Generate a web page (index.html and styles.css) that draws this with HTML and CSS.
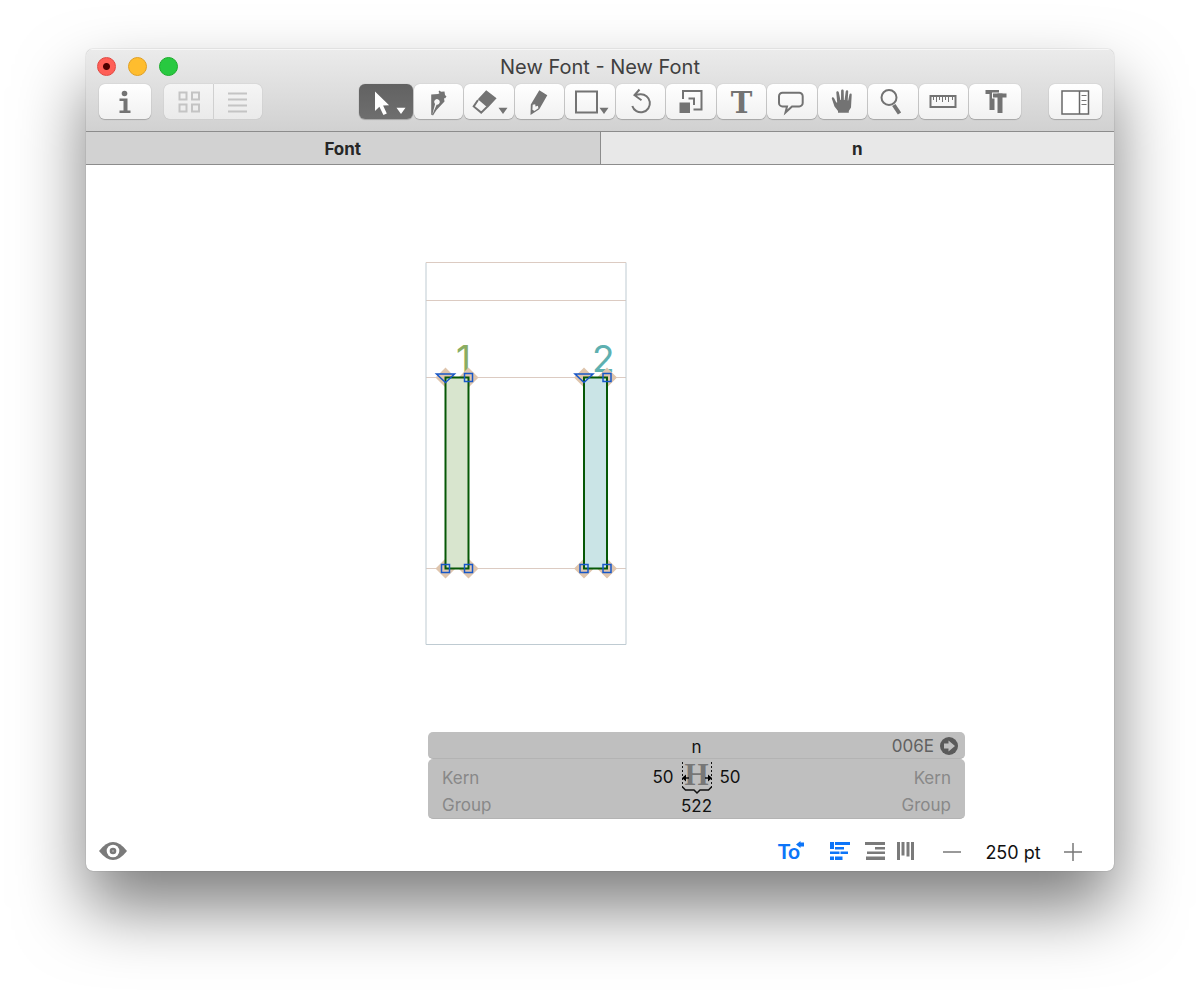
FILE: index.html
```html
<!DOCTYPE html>
<html lang="en">
<head>
<meta charset="utf-8">
<title>New Font - New Font</title>
<link rel="stylesheet" href="styles.css">
</head>
<body>
<main class="window">
  <header class="titlebar">
    <div class="title-row">
      <div class="lights">
        <button class="light close" aria-label="Close"></button>
        <button class="light minimize" aria-label="Minimize"></button>
        <button class="light expand" aria-label="Zoom"></button>
      </div>
      <h1 class="title">New Font - New Font</h1>
    </div>
    <div class="toolbar">
      <button class="tool info" aria-label="Info"><svg viewBox="0 0 52 35"><circle class="fill" cx="25.500" cy="9.500" r="2.800"/><path class="fill" d="M20.500 14.500h8v12h3v2.500H20.500v-2.500h4V17h-4z"/></svg></button>
      <div class="segment">
        <button class="tool" aria-label="Grid view"><svg viewBox="0 0 49 35"><path class="line" d="M15.500 8.500h7v7h-7zM28 8.500h7v7h-7zM15.500 20.500h7v7h-7zM28 20.500h7v7h-7z"/></svg></button>
        <button class="tool" aria-label="List view"><svg viewBox="0 0 49 35"><path class="line" d="M15 9.500h19M15 15.500h19M15 21.500h19M15 27.500h19"/></svg></button>
      </div>
      <nav class="tools" aria-label="Tools">
        <button class="tool active" aria-label="Select"><svg viewBox="0 0 54 35"><path class="fill" d="M16 7.500V27l4.400-4.200 4 8.200 3.400-1.600-3.700-7.800 6-.4zM37.500 23.700h9L42 30z"/></svg></button>
        <button class="tool" aria-label="Draw"><svg viewBox="0 0 50 35"><path class="fill" d="M25.500 6.500l1.500 1.300 3.500-.3.500 3.500 1.500 1.500-1.500 2-1-.5.500 3.500-8 8.500-3.500 5.500-.8-.5 4.400-10.300a2.800 2.800 0 1 0-1.500-.7L18.200 31l-1-.3V10.500l6.800-.5 1.500-.7-1-1.500z"/></svg></button>
        <button class="tool" aria-label="Erase"><svg viewBox="0 0 50 35"><path class="fill" d="M22.200 6.300l10.400 8-8.800 9.500-10-8.500zM34.500 23.700h9L39 30z"/><path class="line" d="M14 16l-4.300 6.400 7.500 6.200 6-5.800"/></svg></button>
        <button class="tool" aria-label="Pencil"><svg viewBox="0 0 50 35"><path class="fill" fill-rule="evenodd" d="M24.300 6.300l8 5-8 14L15.500 31l.3-10.500zM17.700 20.800l-.3 5 2 1.200 4-2.700-.5-2.500-2.400.8-.3-2.300z"/></svg></button>
        <button class="tool" aria-label="Rectangle"><svg viewBox="0 0 50 35"><path class="line" d="M11 7.500h21v21H11z"/><path class="fill" d="M34.500 23.700h9L39 30z"/></svg></button>
        <button class="tool" aria-label="Rotate"><svg viewBox="0 0 50 35"><path class="line" d="M16.300 22a9 9 0 1 0 8-11.700l-6 .7M23.500 5.500L18.500 11.200l7 5"/></svg></button>
        <button class="tool" aria-label="Scale"><svg viewBox="0 0 50 35"><path class="fill" d="M13.500 18.500h10.500v10.500H13.500z"/><path class="line" d="M17 15V7h18.500v18.500h-8M22.500 14.500H28V21"/></svg></button>
        <button class="tool letter" aria-label="Text"><span class="glyph-t">T</span></button>
        <button class="tool" aria-label="Annotate"><svg viewBox="0 0 50 35"><path class="line" d="M15.500 8.700h16.700a3.500 3.500 0 0 1 3.500 3.500v6.700a3.500 3.500 0 0 1-3.500 3.500H25L18.500 28.500 20 22.400h-4.500a3.500 3.500 0 0 1-3.500-3.500v-6.700a3.500 3.500 0 0 1 3.500-3.500z"/></svg></button>
        <button class="tool" aria-label="Hand"><svg viewBox="0 0 50 35"><path class="fill" d="M21 28.800V27l-3.500-4.500-2.700-8c0-1.400 1.600-1.500 2.200-.4l2.300 4.400.9.100L19.300 8.500c0-1.700 2.200-1.800 2.500-.2L23.400 16h.6l.1-9.300c.2-1.600 2.400-1.600 2.600 0l.2 9.300h.7l1.100-8.600c.3-1.500 2.500-1.300 2.500.2L30.700 16.500h.5l1.300-6.200c.4-1.400 2.300-1 2.200.4L34 23.500l-2.200 3.500v1.800z"/></svg></button>
        <button class="tool" aria-label="Magnify"><svg viewBox="0 0 50 35"><circle class="line" cx="21" cy="13.500" r="7.500"/><path class="handle" d="M25.800 21L31.500 29.500"/></svg></button>
        <button class="tool" aria-label="Measure"><svg viewBox="0 0 50 35"><path class="line" d="M12.500 12h25v11h-25z"/><path class="hair" d="M15.500 12v4M18.500 12v6M21.500 12v4M24.500 12v6M27.500 12v4M30.500 12v6M34.500 12v4"/></svg></button>
        <button class="tool" aria-label="True type instructions"><svg viewBox="0 0 52 35"><rect class="fill" x="16.500" y="6" width="13.500" height="4"/><rect class="fill" x="20.500" y="6" width="5" height="20"/><rect class="halo" x="23" y="8.500" width="15" height="6"/><rect class="halo" x="27" y="12" width="7" height="17"/><rect class="fill" x="24" y="9.500" width="13.500" height="4"/><rect class="fill" x="28.500" y="9.500" width="5" height="19.500"/></svg></button>
      </nav>
      <button class="tool sidebar" aria-label="Toggle sidebar"><svg viewBox="0 0 53 35"><path class="sheet" d="M13 7h26.500v23H13zM30.500 7v23"/><path class="hair" d="M32.500 11.500h5M32.500 16.500h5M32.500 20.500h5"/></svg></button>
    </div>
  </header>
  <div class="tabs" role="tablist">
    <button class="tab" role="tab" aria-selected="false">Font</button>
    <button class="tab selected" role="tab" aria-selected="true">n</button>
  </div>
  <section class="canvas">
    <svg class="glyph" viewBox="0 0 202 384">
      <path class="metric" d="M0 38.500h200M0 115.500h200M0 306.500h200"/>
      <path class="frame" d="M0 .5h200v382H0z"/>
      <path class="metric" d="M0 .5h200"/>
      <text class="one" x="30" y="110">1</text>
      <text class="two" x="166" y="110">2</text>
      <path class="diamond" d="M19.500 105.500l10 10-10 10-10-10zM42.500 105.500l10 10-10 10-10-10zM158 105.500l10 10-10 10-10-10zM181 105.500l10 10-10 10-10-10zM19.500 296.500l10 10-10 10-10-10zM42.500 296.500l10 10-10 10-10-10zM158 296.500l10 10-10 10-10-10zM181 296.500l10 10-10 10-10-10z"/>
      <path class="stem green" d="M19.500 115.500h23v191h-23z"/>
      <path class="stem teal" d="M158 115.500h23v191h-23z"/>
      <path class="node" d="M10.500 112h18l-9 8.500zM149 112h18l-9 8.500zM38.500 111.500h8v8h-8zM177 111.500h8v8h-8zM15.500 302.500h8v8h-8zM38.500 302.500h8v8h-8zM154 302.500h8v8h-8zM177 302.500h8v8h-8z"/>
    </svg>
    <form class="panel">
      <div class="panel-head">
        <span class="name">n</span>
        <span class="code">006E</span>
        <button type="button" class="go" aria-label="Show glyph"><svg viewBox="0 0 18 18"><circle cx="9" cy="9" r="9"/><path d="M4 6.500h4.500V3.500L15 9l-6.500 5.500v-3H4z"/></svg></button>
      </div>
      <div class="panel-body">
        <div class="side">
          <input aria-label="Left kerning" placeholder="Kern">
          <input aria-label="Left group" placeholder="Group">
        </div>
        <div class="metrics">
          <div class="bearings">
            <input class="num" aria-label="Left side bearing" value="50">
            <div class="advance">
              <span class="cap">H</span>
              <svg class="marks" viewBox="0 0 32 32"><path class="dots" d="M1.500 0v26M30.500 0v26"/><path class="arrow" d="M4 16h4M24 16h4"/><path class="tip" d="M1 16l4-3.500v7zM31 16l-4-3.500v7z"/><path class="arrow" d="M1.500 25l3 3H13l3 3 3-3h8.500l3-3"/></svg>
            </div>
            <input class="num" aria-label="Right side bearing" value="50">
          </div>
          <input class="width" aria-label="Width" value="522">
        </div>
        <div class="side right">
          <input aria-label="Right kerning" placeholder="Kern">
          <input aria-label="Right group" placeholder="Group">
        </div>
      </div>
    </form>
  </section>
  <footer class="statusbar">
    <button class="flat eye" aria-label="Preview"><svg viewBox="0 0 30 20"><path d="M1 10Q8 1 15 1t14 9q-7 9-14 9T1 10z"/><circle class="white" cx="15" cy="10" r="6.300"/><circle cx="15" cy="10" r="3.300"/><circle class="glint" cx="15" cy="10" r="1"/></svg></button>
    <button class="flat kerning" aria-label="Kerning mode"><span>To</span><svg viewBox="0 0 9 7"><path d="M0 3.500L4.500 0v1.500H8V5.500H4.500V7z"/></svg></button>
    <button class="flat blue ltr" aria-label="Left to right"><svg viewBox="0 0 20 18"><path d="M0 0h4v7H0zM5 0h15v3H5zM5 5h9v2.500H5zM0 9.500h9.500V12H0zM10.500 9.500H18V12h-7.500zM0 14.500h4V18H0zM5 14.500h7.500V18H5z"/></svg></button>
    <button class="flat rtl" aria-label="Right to left"><svg viewBox="0 0 20 18"><path d="M0 0h20v3H0zM10 5h10v2.500H10zM2 9.500h18V12H2zM1 14.500h19V18H1z"/></svg></button>
    <button class="flat vertical" aria-label="Vertical"><svg viewBox="0 0 17 18"><path d="M0 0h3v18H0zM4.500 0h3v13.500h-3zM9.500 0h3v14.500h-3zM14 0h3v18h-3z"/></svg></button>
    <button class="flat minus" aria-label="Smaller"><svg viewBox="0 0 18 18"><path class="thin" d="M0 10h18"/></svg></button>
    <input class="size" aria-label="Font size" value="250 pt">
    <button class="flat plus" aria-label="Larger"><svg viewBox="0 0 18 18"><path class="thin" d="M0 10h18M9 1v18"/></svg></button>
  </footer>
</main>
</body>
</html>
```
FILE: styles.css
```css
* { box-sizing: border-box; }
body {
  margin: 0;
  min-height: 100vh;
  padding: 49px 86px 122px;
  display: flex;
  flex-direction: column;
  background: #fff;
  font-family: Inter, "Liberation Sans", sans-serif;
  font-size: 17px;
  color: #111;
}
button, input {
  font: inherit;
  color: inherit;
  border: 0;
  padding: 0;
  margin: 0;
  background: none;
  min-width: 0;
}
svg { display: block; flex: none; overflow: visible; }
.window {
  flex: 1;
  display: flex;
  flex-direction: column;
  border-radius: 7px;
  overflow: hidden;
  background: #fff;
  box-shadow: 0 0 1px rgba(0, 0, 0, .5), 0 37px 68px rgba(0, 0, 0, .51);
}
.titlebar {
  height: 83px;
  background: linear-gradient(#ebebeb, #d1d1d1);
  border-top: 1px solid #f7f7f7;
  border-bottom: 1px solid #8c8c8c;
}
.title-row { display: grid; height: 34px; align-items: center; }
.title-row > * { grid-area: 1 / 1; }
.title { margin: 0; text-align: center; font-size: 20px; line-height: 34px; font-weight: 400; color: #404040; }
.lights { display: flex; gap: 12px; padding: 0 0 2px 11px; z-index: 1; justify-self: start; }
.light { width: 19px; height: 19px; border-radius: 50%; border: 1px solid; }
.close { background: radial-gradient(circle, #4d0000 3px, #ff5f57 4px); border-color: #e2463f; }
.minimize { background: #ffbd2e; border-color: #e1a023; }
.expand { background: #28c940; border-color: #1dac2c; }
.toolbar { display: flex; padding: 0 12px 0 13px; }
.tool {
  display: flex;
  flex: 1;
  justify-content: center;
  align-items: center;
  height: 35px;
  border-radius: 6px;
  background: linear-gradient(#fff, #f1f1f1);
  box-shadow: 0 0 1px rgba(0, 0, 0, .3), 0 1px 1px rgba(0, 0, 0, .2);
}
.tool svg { height: 35px; }
.info { flex: none; width: 52px; }
.segment { display: flex; gap: 1px; margin-left: 13px; width: 98px; border-radius: 6px; background: #ddd; }
.segment .tool { background: linear-gradient(#f5f5f5, #eaeaea); box-shadow: 0 0 1px rgba(0, 0, 0, .3); --ink: #c4c4c4; }
.segment .tool:first-child { border-radius: 6px 0 0 6px; }
.segment .tool:last-child { border-radius: 0 6px 6px 0; }
.tools { display: flex; gap: 1px; width: 662px; margin-left: auto; margin-right: 28px; }
.tools .active { flex: none; width: 54px; background: linear-gradient(#626262, #6e6e6e); --ink: #fff; }
.tools .tool:last-child { flex: none; width: 52px; }
.sidebar { flex: none; width: 53px; }
.fill { fill: var(--ink, #737373); }
.line { fill: none; stroke: var(--ink, #737373); stroke-width: 2; }
.hair { fill: none; stroke: #737373; stroke-width: 1; }
.halo { fill: #f8f8f8; }
.sheet { fill: #fff; stroke: #686868; stroke-width: 1.500; }
.handle { stroke: #737373; stroke-width: 4; }
.letter { color: #737373; }
.glyph-t { font: 700 29px/35px "DejaVu Serif", serif; padding-top: 3px; }
.tabs { display: flex; border-bottom: 1px solid #8c8c8c; background: #8c8c8c; gap: 1px; }
.tab { flex: 1; height: 32px; padding-top: 3px; font-weight: 700; line-height: 29px; color: #262626; background: #d2d2d2; }
.tab.selected { background: #e8e8e8; }
.canvas { flex: 1; padding: 97px 149px 0 340px; }
.glyph { width: 202px; height: 384px; }
.metric { stroke: #dccbc2; fill: none; }
.frame { stroke: #bfcbd2; fill: none; }
.one, .two { font-size: 37px; }
.one { fill: #8aad62; }
.two { fill: #5eb0b0; }
.diamond { fill: #dfc5ad; }
.stem { stroke: #065806; stroke-width: 2; }
.green { fill: #d8e5ce; }
.teal { fill: #cae4e6; }
.node { fill: none; stroke: #1757c8; stroke-width: 1.500; }
.panel { margin: 86px 0 0 2px; }
.panel-head, .panel-body { background: #bfbfbf; border-bottom: 1px solid #b3b3b3; border-radius: 5px; }
.panel-head { display: grid; grid-template-columns: 1fr auto 1fr 18px; column-gap: 6px; align-items: center; height: 27px; padding: 1px 7px 0 31px; }
.name { grid-column: 2; padding-top: 3px; }
.code { text-align: right; color: #616161; }
.go svg { width: 18px; height: 18px; fill: #5a5a5a; }
.go path { fill: #bfbfbf; }
.panel-body { display: flex; justify-content: space-between; height: 60px; padding: 3px 14px 0; }
.side { display: flex; flex-direction: column; width: 120px; padding-top: 2px; }
.side input { height: 27px; width: 100%; }
.side input::placeholder { color: #888; opacity: 1; }
.right input { text-align: right; }
.bearings { display: flex; align-items: center; justify-content: center; gap: 6px; height: 29px; }
.num { width: 23px; height: 28px; text-align: center; }
.advance { display: grid; width: 32px; height: 29px; justify-items: center; }
.advance > * { grid-area: 1 / 1; }
.cap { font: 700 31px/26px "Liberation Serif", serif; color: #777; }
.marks { width: 32px; height: 32px; }
.arrow, .dots { fill: none; stroke: #111; stroke-width: 1.500; }
.dots { stroke-width: 1; stroke-dasharray: 2 2; }
.metrics { display: flex; flex-direction: column; align-items: center; }
.width { width: 60px; height: 28px; padding-top: 2px; text-align: center; }
.statusbar { display: flex; align-items: center; height: 38px; padding: 0 32px 3px 12px; }
.flat { color: #7a7a7a; height: 22px; display: flex; align-items: center; }
.flat svg { fill: currentColor; height: 18px; }
.eye svg { height: 20px; }
.eye .white { fill: #fff; }
.eye .glint { fill: #aaa; }
.kerning { margin-left: auto; color: #0d75f8; font: 700 21px/22px Lato, sans-serif; }
.kerning .flat { color: inherit; }
.kerning svg { height: 7px; margin: 0 0 12px -4px; }
.blue { color: #0d75f8; }
.ltr { margin-left: 25px; }
.rtl { margin-left: 15px; }
.vertical { margin-left: 12px; }
.minus { margin-left: 29px; }
.thin { fill: none; stroke: #777; stroke-width: 1.500; }
.size { width: 60px; margin: 3px 21px 0 22px; font-size: 18px; text-align: center; }
```
